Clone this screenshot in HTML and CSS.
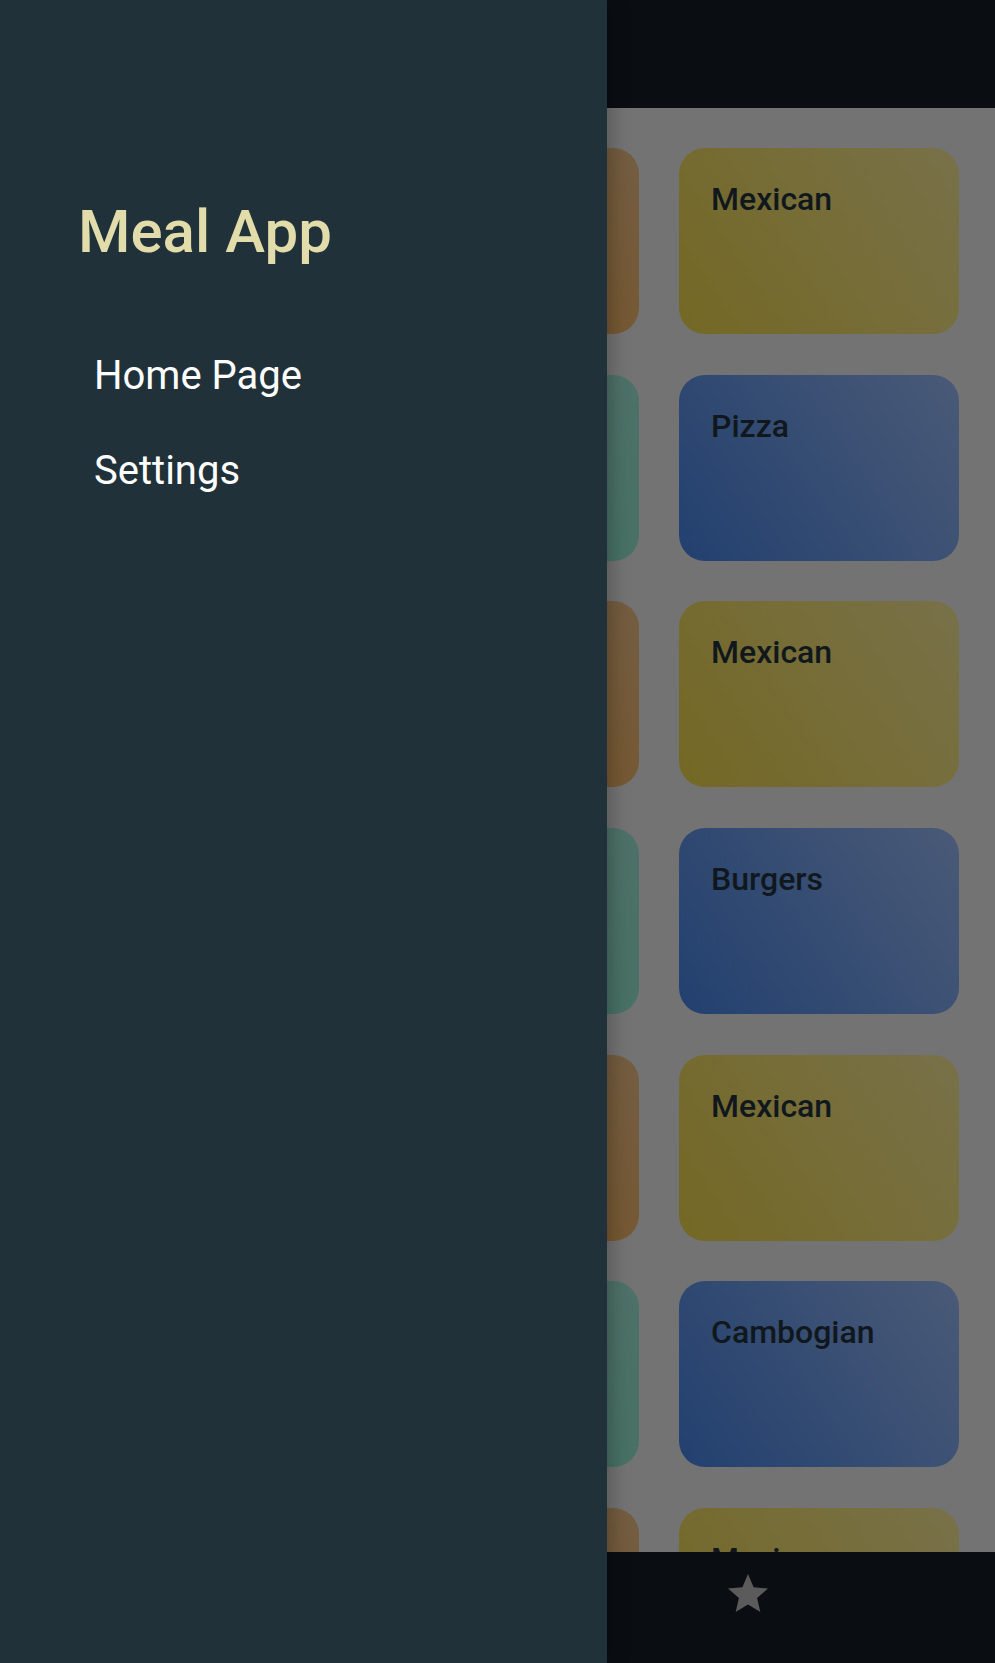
FILE: index.html
```html
<!DOCTYPE html>
<html lang="en">
<head>
<meta charset="utf-8">
<title>Meal App</title>
<link rel="stylesheet" href="styles.css">
</head>
<body>
<div class="screen">
  <div class="app">
    <header class="appbar"></header>
    <main class="content">
      <div class="grid">
        <div class="card c-purple"><span class="card-title">Quick</span></div>
        <div class="card c-orange"><span class="card-title">Italian</span></div>
        <div class="card c-yellow"><span class="card-title">Mexican</span></div>

        <div class="card c-red"><span class="card-title">German</span></div>
        <div class="card c-green"><span class="card-title">Asian</span></div>
        <div class="card c-blue"><span class="card-title">Pizza</span></div>

        <div class="card c-purple"><span class="card-title">Quick</span></div>
        <div class="card c-orange"><span class="card-title">Italian</span></div>
        <div class="card c-yellow"><span class="card-title">Mexican</span></div>

        <div class="card c-red"><span class="card-title">German</span></div>
        <div class="card c-green"><span class="card-title">Asian</span></div>
        <div class="card c-blue"><span class="card-title">Burgers</span></div>

        <div class="card c-purple"><span class="card-title">Quick</span></div>
        <div class="card c-orange"><span class="card-title">Italian</span></div>
        <div class="card c-yellow"><span class="card-title">Mexican</span></div>

        <div class="card c-red"><span class="card-title">German</span></div>
        <div class="card c-green"><span class="card-title">Asian</span></div>
        <div class="card c-blue"><span class="card-title">Cambogian</span></div>

        <div class="card c-purple"><span class="card-title">Quick</span></div>
        <div class="card c-orange"><span class="card-title">Italian</span></div>
        <div class="card c-yellow"><span class="card-title">Mexican</span></div>
      </div>
    </main>
    <nav class="bottombar">
      <div class="tab"></div>
      <div class="tab tab-fav">
        <svg class="star" viewBox="0 0 24 24" width="48" height="48" aria-hidden="true">
          <path d="M12 17.27L18.18 21l-1.64-7.03L22 9.24l-7.19-.61L12 2 9.19 8.63 2 9.24l5.46 4.73L5.82 21z"/>
        </svg>
      </div>
    </nav>
  </div>

  <aside class="drawer">
    <h1 class="drawer-title">Meal App</h1>
    <ul class="drawer-list">
      <li class="drawer-item">Home Page</li>
      <li class="drawer-item">Settings</li>
    </ul>
  </aside>
</div>
</body>
</html>
```

FILE: styles.css
```css
* {
  box-sizing: border-box;
}

html, body {
  margin: 0;
  padding: 0;
}

body {
  font-family: Roboto, "Noto Sans", "Liberation Sans", sans-serif;
  background: #737373;
}

.screen {
  position: relative;
  width: 995px;
  height: 1663px;
  overflow: hidden;
}

.app {
  display: flex;
  flex-direction: column;
  height: 100%;
  background: #737373;
}

.appbar {
  height: 108px;
  flex: 0 0 108px;
  background: #0a0e12;
}

.content {
  flex: 1 1 auto;
  overflow: hidden;
  padding: 40px 0 0 39px;
}

.grid {
  display: grid;
  grid-template-columns: repeat(3, 280px);
  grid-auto-rows: 186px;
  column-gap: 40px;
  row-gap: 40.7px;
}

.card {
  border-radius: 26px;
  padding: 35px 30px 35px 32px;
}

.card-title {
  display: block;
  font-size: 32px;
  line-height: 1;
  font-weight: 500;
  color: #10181d;
  white-space: nowrap;
}

.c-yellow {
  background: linear-gradient(56deg, #746824, #787149);
}

.c-blue {
  background: linear-gradient(56deg, #22406f, #4a5a77);
}

.c-orange {
  background: linear-gradient(56deg, #7b5118, #735d42);
}

.c-green {
  background: linear-gradient(56deg, #3c7060, #4e7168);
}

.c-purple {
  background: linear-gradient(56deg, #4a2a6a, #605070);
}

.c-red {
  background: linear-gradient(56deg, #742020, #704848);
}

.bottombar {
  height: 111px;
  flex: 0 0 111px;
  background: #0a0e12;
  display: flex;
}

.tab {
  flex: 1 1 0;
  display: flex;
  justify-content: center;
}

.tab-fav {
  padding-top: 18px;
  padding-left: 6px;
}

.star {
  display: block;
  fill: #5b5b5b;
}

.drawer {
  position: absolute;
  top: 0;
  left: 0;
  width: 607px;
  height: 100%;
  background: #21313a;
  box-shadow: 4px 0 18px rgba(0, 0, 0, 0.25);
  padding-top: 202px;
}

.drawer-title {
  margin: 0 0 0 78px;
  font-size: 60px;
  line-height: 1;
  font-weight: 500;
  color: #e2dcab;
}

.drawer-list {
  list-style: none;
  margin: 66px 0 0 0;
  padding: 0;
}

.drawer-item {
  padding: 27.5px 0 27.5px 94px;
  font-size: 40px;
  line-height: 1;
  font-weight: 400;
  color: #ffffff;
}
```
